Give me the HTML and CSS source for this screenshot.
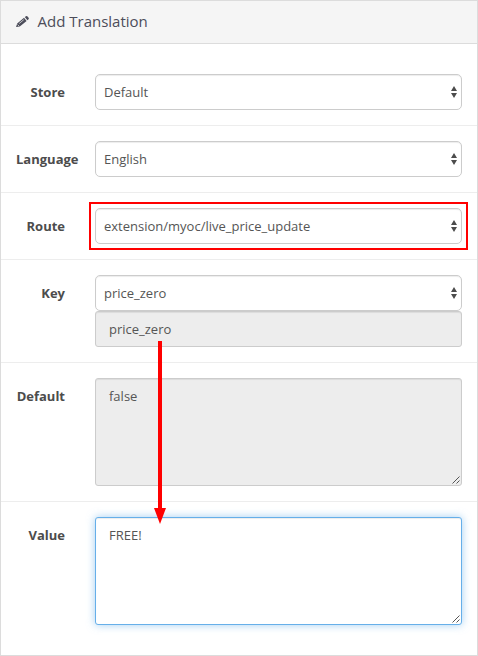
FILE: index.html
```html
<!DOCTYPE html>
<html lang="en">
<head>
<meta charset="utf-8">
<title>Add Translation</title>
<link rel="stylesheet" href="styles.css">
</head>
<body>
<svg class="symbols" width="0" height="0">
  <symbol id="updown" viewBox="0 0 6 12"><path d="M3 0 6 5H0zM0 7H6L3 12z" fill="#4c4c4c"/></symbol>
  <symbol id="grip" viewBox="0 0 8 8"><path d="M.5 7.5l7-7M4.5 7.5l3-3" fill="none" stroke="#555" stroke-width="1"/></symbol>
</svg>
<main class="panel">
  <header class="heading">
    <svg class="pencil" width="13" height="13" viewBox="0 0 13 13"><path d="M0 12 1.2 8.4 8 2.8 10.6 5.9 3.8 11.5zM8.8 2.1 10 1.2Q10.7.7 11.3 1.3L12.6 2.8Q13.1 3.5 12.5 4.2L11.4 5.2z" fill="#4c4d5a"/><path d="M1.6 9.6 3.2 11.2M3.2 8.5 7.8 4.7" fill="none" stroke="#f5f5f5" stroke-width=".7"/></svg>
    <h1>Add Translation</h1>
  </header>
  <form class="body">
    <div class="row">
      <label for="store">Store</label>
      <div class="field"><select id="store"><option>Default</option></select><svg class="updown"><use href="#updown"/></svg></div>
    </div>
    <div class="row">
      <label for="language">Language</label>
      <div class="field"><select id="language"><option>English</option></select><svg class="updown"><use href="#updown"/></svg></div>
    </div>
    <div class="row">
      <label for="route">Route</label>
      <div class="field highlighted"><select id="route"><option>extension/myoc/live_price_update</option></select><svg class="updown"><use href="#updown"/></svg></div>
    </div>
    <div class="row">
      <label for="key">Key</label>
      <div>
        <div class="field"><select id="key"><option>price_zero</option></select><svg class="updown"><use href="#updown"/></svg></div>
        <div class="field"><input class="disabled" value="price_zero" readonly>
          <svg class="arrow" width="12" height="183" viewBox="0 0 12 183"><path d="M4 0H8V167H12L6 183 0 167H4z" fill="#f00"/></svg>
        </div>
      </div>
    </div>
    <div class="row">
      <label for="default">Default</label>
      <div class="field"><textarea id="default" class="disabled" readonly>false</textarea><svg class="grip"><use href="#grip"/></svg></div>
    </div>
    <div class="row">
      <label for="value">Value</label>
      <div class="field"><textarea id="value" class="active">FREE!</textarea><svg class="grip"><use href="#grip"/></svg></div>
    </div>
  </form>
</main>
</body>
</html>
```

FILE: styles.css
```css
* { box-sizing: border-box; }

body {
  margin: 0;
  background: #fff;
  color: #4c4c4c;
  font: 13px/20px "Open Sans", sans-serif;
}

.symbols { position: absolute; }

.panel {
  height: 656px;
  border: 1px solid #dcdcdc;
}

.heading {
  display: flex;
  align-items: center;
  gap: 8.5px;
  height: 43px;
  padding: 0 15px 2px;
  border-bottom: 1px solid #dcdcdc;
  background: #f5f5f5;
  color: #4c4d5a;
}

.heading h1 {
  margin: 0;
  font-size: 15px;
  font-weight: 400;
  line-height: 20px;
}

.body { padding: 15px 0; }

.row {
  display: grid;
  grid-template-columns: 49px 367px;
  column-gap: 30px;
  padding: 15px;
}

.row + .row { border-top: 1px solid #ededed; }

label {
  justify-self: safe end;
  padding-top: 8px;
  font-weight: 700;
}

.field { position: relative; }

select,
input,
textarea {
  display: block;
  width: 100%;
  height: 36px;
  margin: 0;
  border: 1px solid #ccc;
  border-radius: 3px;
  outline: 0;
  background: #fff;
  box-shadow: inset 0 1px 1px rgba(0, 0, 0, .075);
  color: #555;
  font: inherit;
}

select {
  padding: 0 8px;
  border-radius: 5px;
  appearance: none;
}

input { padding: 0 13px; }

textarea {
  height: 108px;
  padding: 7px 13px;
  resize: none;
}

.disabled { background: #ededed; }

.active {
  border-color: #66afe9;
  box-shadow: inset 0 1px 1px rgba(0, 0, 0, .075), 0 0 8px rgba(102, 175, 233, .6);
}

.updown {
  position: absolute;
  top: 12px;
  right: 5px;
  width: 6px;
  height: 12px;
}

.grip {
  position: absolute;
  right: 2px;
  bottom: 2px;
  width: 8px;
  height: 8px;
}

.highlighted::before {
  content: "";
  position: absolute;
  inset: -6px;
  border: 2px solid #f00;
  pointer-events: none;
}

.arrow {
  position: absolute;
  top: 30px;
  left: 59px;
  z-index: 1;
}
```
